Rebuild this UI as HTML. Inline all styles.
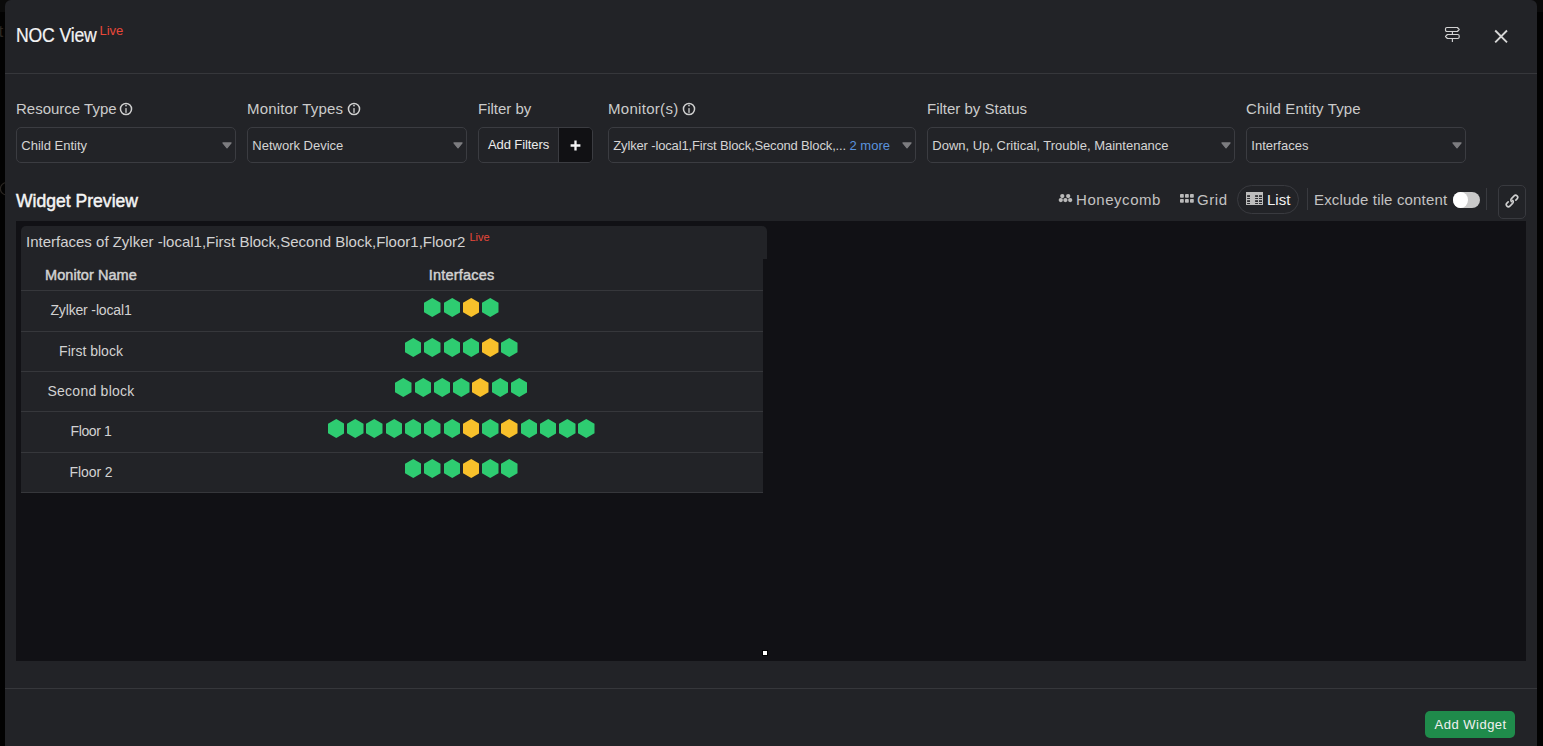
<!DOCTYPE html>
<html><head><meta charset="utf-8">
<style>
*{box-sizing:border-box;margin:0;padding:0}
html,body{width:1543px;height:746px;overflow:hidden;background:linear-gradient(#0a0a0a 0,#0a0a0a 12.5px,#020202 12.5px);font-family:"Liberation Sans",sans-serif}
.modal{position:absolute;left:5px;top:0;width:1532px;height:760px;background:#222327;border-radius:6px 6px 0 0}
.abs{position:absolute;white-space:nowrap}
.title{left:11px;top:23.9px;font-size:20px;line-height:normal;color:#f4f4f4;letter-spacing:-0.2px;-webkit-text-stroke:0.2px #f4f4f4;transform:scaleX(0.882);transform-origin:0 0}
.live{color:#e8483a;font-size:13px;position:absolute}
.hsep{position:absolute;left:0;width:1532px;height:1px;background:#36373b}
.lbl{font-size:15px;color:#cbcbcb;top:99.6px}
.sel{position:absolute;top:127px;height:36px;border:1px solid #3b3c41;border-radius:5px;background:#222327}
.sel .t{position:absolute;left:4.3px;top:10.3px;font-size:13px;color:#d4d4d4;white-space:nowrap}
.sel .arr{position:absolute;right:3.1px;top:13.9px;width:10px;height:7px}
.info{position:absolute;top:101.9px;width:14px;height:14px}
.preview{position:absolute;left:11px;top:221px;width:1510px;height:440px;background:#111115}
.card-h{position:absolute;left:5px;top:5px;width:746px;height:33px;background:#222327;border-radius:5px 5px 0 0}
.tbl{position:absolute;left:5px;top:38px;width:742px;height:233px;background:#222327}
.row{position:absolute;left:0;width:742px;height:40.5px;border-top:1px solid #36373b}
.row .nm{position:absolute;left:0;width:140px;text-align:center;top:11.4px;letter-spacing:-0.1px;font-size:14px;color:#d2d2d2;white-space:nowrap}
.row .hx{position:absolute;left:139.4px;width:602px;top:6.5px;height:20px;text-align:center;font-size:0;white-space:nowrap}
.hx svg{display:inline-block;width:16.5px;height:19px;margin:0 1.4px}
.tb{position:absolute;top:191.2px;font-size:15px;color:#c2c2c2;white-space:nowrap}
</style></head><body>
<svg width="0" height="0" style="position:absolute">
  <defs>
    <polygon id="hg" points="8.25,0 16.5,4.75 16.5,14.25 8.25,19 0,14.25 0,4.75" fill="#2ecc71"/>
    <polygon id="hy" points="8.25,0 16.5,4.75 16.5,14.25 8.25,19 0,14.25 0,4.75" fill="#f8c02b"/>
  </defs>
</svg>
<div style="position:absolute;left:-1.5px;top:21.5px;font-size:17px;color:#2a2724">t</div>
<svg style="position:absolute;left:0;top:180px" width="12" height="18" viewBox="0 0 12 18"><circle cx="6.6" cy="8.7" r="6.2" fill="none" stroke="#2a2622" stroke-width="1.2"/></svg>
<div class="modal">
  <div class="abs title">NOC View</div>
  <div class="abs live" style="left:94.5px;top:23px">Live</div>
  <!-- header icons -->
  <svg class="abs" style="left:1439px;top:26px" width="17" height="17" viewBox="0 0 17 17">
    <path d="M3,1.5 H13.4 L15.2,3.5 L13.4,5.5 H3 Q1.5,5.5 1.5,4 V3 Q1.5,1.5 3,1.5 Z" fill="none" stroke="#d2d2d2" stroke-width="1.15" stroke-linejoin="round"/>
    <path d="M3.4,8.5 H13.7 Q15.2,8.5 15.2,10 V11 Q15.2,12.5 13.7,12.5 H3.4 L1.5,10.5 Z" fill="none" stroke="#d2d2d2" stroke-width="1.15" stroke-linejoin="round"/>
    <path d="M8.4,6 V8 M8.4,13 V16" stroke="#d2d2d2" stroke-width="1.15"/>
  </svg>
  <svg class="abs" style="left:1489px;top:29px" width="15" height="15" viewBox="0 0 15 15">
    <path d="M1.2,1.5 L13.0,13.3 M13.0,1.5 L1.2,13.3" stroke="#d6d6d6" stroke-width="1.9"/>
  </svg>
  <div class="hsep" style="top:73px"></div>

  <div class="abs lbl" style="left:11px">Resource Type</div>
  <div class="abs lbl" style="left:242px;letter-spacing:0.18px">Monitor Types</div>
  <svg class="info" style="left:114.35px" viewBox="0 0 14 14"><circle cx="7" cy="7" r="5.55" fill="none" stroke="#d0d0d0" stroke-width="1.5"/><circle cx="7" cy="3.6" r="0.85" fill="#d0d0d0"/><rect x="6.35" y="6.1" width="1.3" height="4.75" fill="#d0d0d0"/></svg><svg class="info" style="left:341.75px" viewBox="0 0 14 14"><circle cx="7" cy="7" r="5.55" fill="none" stroke="#d0d0d0" stroke-width="1.5"/><circle cx="7" cy="3.6" r="0.85" fill="#d0d0d0"/><rect x="6.35" y="6.1" width="1.3" height="4.75" fill="#d0d0d0"/></svg><svg class="info" style="left:676.5px" viewBox="0 0 14 14"><circle cx="7" cy="7" r="5.55" fill="none" stroke="#d0d0d0" stroke-width="1.5"/><circle cx="7" cy="3.6" r="0.85" fill="#d0d0d0"/><rect x="6.35" y="6.1" width="1.3" height="4.75" fill="#d0d0d0"/></svg>
  <div class="abs lbl" style="left:473px">Filter by</div>
  <div class="abs lbl" style="left:603px;letter-spacing:0.3px">Monitor(s)</div>
  <div class="abs lbl" style="left:922px">Filter by Status</div>
  <div class="abs lbl" style="left:1241px;letter-spacing:0.15px">Child Entity Type</div>

  <div class="sel" style="left:11px;width:220px"><span class="t">Child Entity</span><svg class="arr" viewBox="0 0 10 7"><path d="M0.9,0.9 H9.1 L5,5.9 Z" fill="#7d7d80" stroke="#7d7d80" stroke-width="1.2" stroke-linejoin="round"/></svg></div>
  <div class="sel" style="left:242px;width:220px"><span class="t">Network Device</span><svg class="arr" viewBox="0 0 10 7"><path d="M0.9,0.9 H9.1 L5,5.9 Z" fill="#7d7d80" stroke="#7d7d80" stroke-width="1.2" stroke-linejoin="round"/></svg></div>
  <div class="sel" style="left:473px;width:114.5px;overflow:hidden"><span class="t" style="left:9px;top:9.4px;color:#ececec;letter-spacing:-0.1px">Add Filters</span><span style="position:absolute;left:79px;top:0;width:35px;height:34px;background:#111114;border-left:1px solid #3b3c41"></span>
    <svg class="abs" style="left:90.7px;top:11.9px" width="11" height="11" viewBox="0 0 11 11"><path d="M5.5,0.6 V10.4 M0.6,5.5 H10.4" stroke="#f4f4f4" stroke-width="2.3"/></svg></div>
  <div class="sel" style="left:603px;width:308px"><span class="t" style="letter-spacing:-0.15px">Zylker -local1,First Block,Second Block,...<span style="color:#5b93dd;margin-left:3.5px;letter-spacing:0">2 more</span></span><svg class="arr" viewBox="0 0 10 7"><path d="M0.9,0.9 H9.1 L5,5.9 Z" fill="#7d7d80" stroke="#7d7d80" stroke-width="1.2" stroke-linejoin="round"/></svg></div>
  <div class="sel" style="left:922px;width:308px"><span class="t">Down, Up, Critical, Trouble, Maintenance</span><svg class="arr" viewBox="0 0 10 7"><path d="M0.9,0.9 H9.1 L5,5.9 Z" fill="#7d7d80" stroke="#7d7d80" stroke-width="1.2" stroke-linejoin="round"/></svg></div>
  <div class="sel" style="left:1241px;width:220px"><span class="t">Interfaces</span><svg class="arr" viewBox="0 0 10 7"><path d="M0.9,0.9 H9.1 L5,5.9 Z" fill="#7d7d80" stroke="#7d7d80" stroke-width="1.2" stroke-linejoin="round"/></svg></div>

  <div class="abs" style="left:11px;top:190.3px;font-size:18.8px;font-weight:normal;color:#f4f4f4;-webkit-text-stroke:0.5px #f4f4f4;letter-spacing:0;transform:scaleX(0.935);transform-origin:0 0">Widget Preview</div>

  <!-- toolbar -->
  <svg class="abs" style="left:1053px;top:193px" width="15" height="10" viewBox="0 0 15 10">
    <g fill="#b9b9b9"><circle cx="4.3" cy="3.1" r="2.15"/><circle cx="10.2" cy="3.1" r="2.15"/><circle cx="2.8" cy="7.1" r="2.15"/><circle cx="7.4" cy="7.1" r="2.15"/><circle cx="12.2" cy="7.1" r="2.15"/></g>
  </svg>
  <div class="tb" style="left:1071px;letter-spacing:0.55px">Honeycomb</div>
  <svg class="abs" style="left:1175px;top:194px" width="14" height="9" viewBox="0 0 14 9">
    <g fill="#b9b9b9"><rect x="0" y="0" width="3.8" height="3.8" rx="0.8"/><rect x="5" y="0" width="3.8" height="3.8" rx="0.8"/><rect x="10" y="0" width="3.8" height="3.8" rx="0.8"/><rect x="0" y="4.9" width="3.8" height="3.8" rx="0.8"/><rect x="5" y="4.9" width="3.8" height="3.8" rx="0.8"/><rect x="10" y="4.9" width="3.8" height="3.8" rx="0.8"/></g>
  </svg>
  <div class="tb" style="left:1192px;letter-spacing:0.6px">Grid</div>
  <div class="abs" style="left:1232px;top:185px;width:62px;height:29px;border:1px solid #393a3f;border-radius:15px"></div>
  <svg class="abs" style="left:1241px;top:192px" width="17" height="13" viewBox="0 0 17 13"><rect x="0" y="0" width="17" height="13" fill="#bdbdbd"/><g fill="#16161a"><rect x="1.1" y="3.3" width="2.9" height="1.5"/><rect x="9.1" y="3.3" width="2.9" height="1.5"/><rect x="13.0" y="3.3" width="3.0" height="1.5"/><rect x="1.1" y="6.15" width="2.9" height="0.85"/><rect x="9.1" y="6.15" width="2.9" height="0.85"/><rect x="13.0" y="6.15" width="3.0" height="0.85"/><rect x="1.1" y="8.3" width="2.9" height="1.55"/><rect x="9.1" y="8.3" width="2.9" height="1.55"/><rect x="13.0" y="8.3" width="3.0" height="1.55"/><rect x="1.1" y="11.1" width="2.9" height="0.85"/><rect x="9.1" y="11.1" width="2.9" height="0.85"/><rect x="13.0" y="11.1" width="3.0" height="0.85"/></g></svg>
  <div class="tb" style="left:1262px;color:#f2f2f2">List</div>
  <div class="abs" style="left:1302px;top:188px;width:1px;height:22px;background:#393a3f"></div>
  <div class="tb" style="left:1309px;letter-spacing:0.16px">Exclude tile content</div>
  <div class="abs" style="left:1448px;top:192px;width:27px;height:16px;border-radius:8px;background:#c9c9c9"></div>
  <div class="abs" style="left:1447.8px;top:192px;width:14.8px;height:16px;border-radius:50%;background:#ffffff"></div>
  <div class="abs" style="left:1481px;top:188px;width:1px;height:22px;background:#393a3f"></div>
  <div class="abs" style="left:1493px;top:185px;width:28px;height:34px;border:1px solid #393a3f;border-radius:5px"></div>
  <svg class="abs" style="left:1497.1px;top:191.3px" width="20" height="20" viewBox="-10 -10 20 20">
    <g transform="rotate(-45)" fill="none" stroke="#cfcfcf" stroke-width="1.6" stroke-linecap="round">
      <path d="M-3.3,-2.1 L-5.1,-2.1 A2.1,2.1 0 0 0 -5.1,2.1 L-1.3,2.1 A2.1,2.1 0 0 0 0.8,0"/>
      <path d="M3.3,2.1 L5.1,2.1 A2.1,2.1 0 0 0 5.1,-2.1 L1.3,-2.1 A2.1,2.1 0 0 0 -0.8,0"/>
    </g>
  </svg>

  <div class="preview">
    <div class="card-h"><span class="abs" style="left:5px;top:7.2px;font-size:15px;color:#d2d2d2">Interfaces of Zylker -local1,First Block,Second Block,Floor1,Floor2</span><span class="abs live" style="left:448.5px;top:4.5px;font-size:11px">Live</span></div>
    <div class="tbl">
      <div class="abs" style="left:0;width:140px;text-align:center;top:8px;font-size:14.5px;font-weight:normal;-webkit-text-stroke:0.45px #d2d2d2;color:#d2d2d2;letter-spacing:0.06px">Monitor Name</div>
      <div class="abs" style="left:139.6px;width:602px;text-align:center;top:8px;font-size:14.5px;font-weight:normal;-webkit-text-stroke:0.45px #d2d2d2;color:#d2d2d2;letter-spacing:0.2px">Interfaces</div>
      <div class="row" style="top:31px"><div class="nm" style="letter-spacing:-0.15px">Zylker -local1</div><div class="hx" style="top:7.1px"><svg><use href="#hg"/></svg><svg><use href="#hg"/></svg><svg><use href="#hy"/></svg><svg><use href="#hg"/></svg></div></div>
      <div class="row" style="top:72px"><div class="nm" style="letter-spacing:0">First block</div><div class="hx" style="top:6.2px"><svg><use href="#hg"/></svg><svg><use href="#hg"/></svg><svg><use href="#hg"/></svg><svg><use href="#hg"/></svg><svg><use href="#hy"/></svg><svg><use href="#hg"/></svg></div></div>
      <div class="row" style="top:112px"><div class="nm" style="letter-spacing:0.25px">Second block</div><div class="hx" style="top:6.1px"><svg><use href="#hg"/></svg><svg><use href="#hg"/></svg><svg><use href="#hg"/></svg><svg><use href="#hg"/></svg><svg><use href="#hy"/></svg><svg><use href="#hg"/></svg><svg><use href="#hg"/></svg></div></div>
      <div class="row" style="top:152px"><div class="nm" style="letter-spacing:-0.4px">Floor 1</div><div class="hx" style="top:6.9px"><svg><use href="#hg"/></svg><svg><use href="#hg"/></svg><svg><use href="#hg"/></svg><svg><use href="#hg"/></svg><svg><use href="#hg"/></svg><svg><use href="#hg"/></svg><svg><use href="#hg"/></svg><svg><use href="#hy"/></svg><svg><use href="#hg"/></svg><svg><use href="#hy"/></svg><svg><use href="#hg"/></svg><svg><use href="#hg"/></svg><svg><use href="#hg"/></svg><svg><use href="#hg"/></svg></div></div>
      <div class="row" style="top:193px"><div class="nm">Floor 2</div><div class="hx" style="top:6.0px"><svg><use href="#hg"/></svg><svg><use href="#hg"/></svg><svg><use href="#hg"/></svg><svg><use href="#hy"/></svg><svg><use href="#hg"/></svg><svg><use href="#hg"/></svg></div></div>
      <div class="abs" style="left:0;top:233px;width:742px;height:1px;background:#36373b"></div>
    </div>
    <div class="abs" style="left:746px;top:429px;width:6px;height:6px;background:#000;padding:1px"><div style="width:4px;height:4px;background:#fff"></div></div>
  </div>

  <div class="hsep" style="top:688px"></div>
  <div class="abs" style="left:1420px;top:711px;width:90px;height:27px;background:#1f8b4b;border-radius:5px"></div>
  <div class="abs" style="left:1429.5px;top:716.6px;font-size:13px;letter-spacing:0.5px;color:#f0f0f0">Add Widget</div>
</div>
</body></html>
